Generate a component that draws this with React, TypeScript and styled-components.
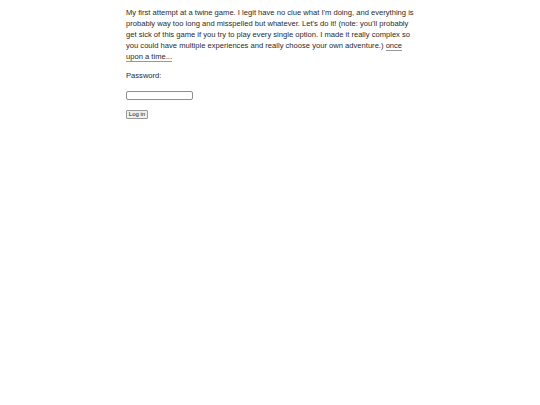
import React from 'react';
import styled, { createGlobalStyle } from 'styled-components';

const GlobalStyle = createGlobalStyle`
    body {
        margin: 0;
        background: #fff;
        color: #2a2a2a;
        font-family: "Liberation Sans", Arial, sans-serif;
    }
`;

const Passage = styled.div`
    width: 290px;
    margin: 0 auto;
    padding: 7px 0 0 2px;
    font-size: 7.6px;
    line-height: 11px;
`;

const Para = styled.p<{ $gap?: number }>`
    margin: 0 0 ${(p) => p.$gap ?? 8}px 0;
`;

const Link = styled.a`
    color: #2a2a2a;
    text-decoration: none;
    border-bottom: 1px solid #999;
    cursor: pointer;
`;

const Field = styled.input`
    display: block;
    box-sizing: border-box;
    width: 67px;
    height: 9px;
    padding: 1px;
    margin: 0 0 10px 0;
    border: 1px solid #8f8f8f;
    border-radius: 2px;
    font-size: 6px;
`;

const Button = styled.button`
    display: block;
    box-sizing: border-box;
    width: 22px;
    height: 9px;
    padding: 0;
    font-family: "Liberation Sans", Arial, sans-serif;
    font-size: 6px;
    line-height: 7px;
    background: #efefef;
    border: 1px solid #999;
    border-radius: 1px;
    color: #222;
`;

export default function App() {
    return (
        <>
            <GlobalStyle />
            <Passage>
                <Para>
                    My first attempt at a twine game. I legit have no clue what I'm doing, and everything is
                    probably way too long and misspelled but whatever. Let's do it! (note: you'll probably
                    get sick of this game if you try to play every single option. I made it really complex so
                    you could have multiple experiences and really choose your own adventure.){' '}
                    <Link>once upon a time...</Link>
                </Para>
                <Para $gap={10}>Password:</Para>
                <Field type="password" />
                <Button>Log in</Button>
            </Passage>
        </>
    );
}
